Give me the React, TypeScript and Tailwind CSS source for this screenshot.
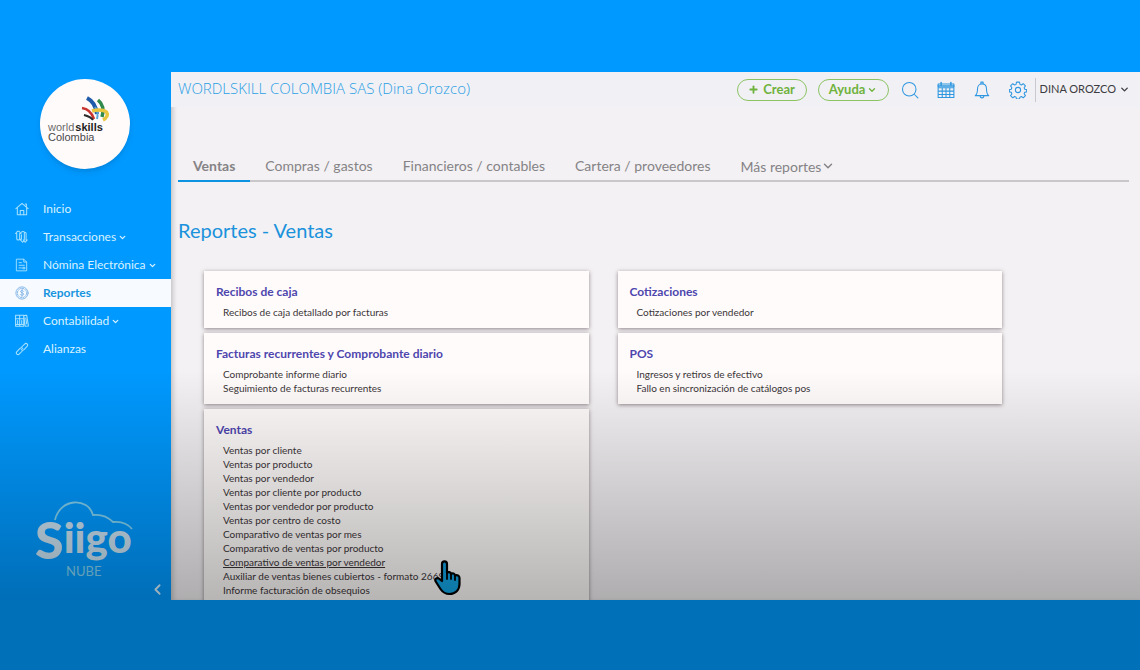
import type { ReactNode } from "react";
import { ChevronDown, ChevronLeft, Plus } from "lucide-react";

type MenuItem = {
  label: string;
  icon: ReactNode;
  active?: boolean;
  dropdown?: boolean;
};

type ReportGroup = {
  title: string;
  reports: string[];
};

const iconProps = {
  viewBox: "0 0 24 24",
  fill: "none",
  stroke: "currentColor",
  strokeLinecap: "round" as const,
  strokeLinejoin: "round" as const,
};

const menu: MenuItem[] = [
  {
    label: "Inicio",
    icon: (
      <svg {...iconProps} strokeWidth={1.8} className="size-[14px]">
        <path d="M1.5 11.5 12 2.5l10.5 9M4 9.8V22h16V9.8M17.5 3.5h2v4" />
        <path d="M9 22v-7.500h6V22" />
      </svg>
    ),
  },
  {
    label: "Transacciones",
    dropdown: true,
    icon: (
      <svg {...iconProps} strokeWidth={1.8} className="size-[14px]">
        <path d="M4.500 2 1 6h2v9c0 3 5 3 5 0V6h2.500L6.500 2Z" />
        <path d="M11 4c1-2 5-2 5 0v3M11 8v8H8.500l4.500 5 2-2M16 7v10h-2l3.500 4 3.500-4h-2V6c0-2-2-2-3-1" />
      </svg>
    ),
  },
  {
    label: "Nómina Electrónica",
    dropdown: true,
    icon: (
      <svg {...iconProps} strokeWidth={1.6} className="size-[14px]">
        <path d="M3 2h12l5 5v15H3ZM15 2v5h5" />
        <path d="M7 8h4M7 12.500h9M7 17h4M14 16h3v2.500h-3Z" />
      </svg>
    ),
  },
  {
    label: "Reportes",
    active: true,
    icon: (
      <svg {...iconProps} strokeWidth={1.6} className="size-[14px]">
        <circle cx="12" cy="12" r="10.500" />
        <circle cx="12" cy="12" r="8" strokeDasharray="4 2" />
        <path d="M15 9c-.5-1.500-5.500-2-5.500.5S15 11.500 15 14s-5 2.500-6 .5M12 6v12" />
      </svg>
    ),
  },
  {
    label: "Contabilidad",
    dropdown: true,
    icon: (
      <svg {...iconProps} strokeWidth={1.8} className="size-[14px]">
        <path d="M1 2h7v19H1ZM8 2h7v19H8ZM15 2.500l5-.5 3 18.500-5.500.5Z" />
        <path d="M1 8h7M8 8h7M4.500 11v6M11.500 11v6M1 18h14M18.500 7l1.500 10" />
      </svg>
    ),
  },
  {
    label: "Alianzas",
    icon: (
      <svg {...iconProps} strokeWidth={1.8} className="size-[14px]">
        <path d="m11 9 5.500-5.500c3-3 7 1 4.200 4L15.500 13c-1.500 1.500-3.500 1.300-4.800 0" />
        <path d="m13 15-5.500 5.500c-3 3-7-1-4.200-4L8.500 11c1.500-1.500 3.500-1.300 4.800 0" />
      </svg>
    ),
  },
];

const tabs = [
  "Ventas",
  "Compras / gastos",
  "Financieros / contables",
  "Cartera / proveedores",
];

const leftGroups: ReportGroup[] = [
  { title: "Recibos de caja", reports: ["Recibos de caja detallado por facturas"] },
  {
    title: "Facturas recurrentes y Comprobante diario",
    reports: ["Comprobante informe diario", "Seguimiento de facturas recurrentes"],
  },
  {
    title: "Ventas",
    reports: [
      "Ventas por cliente",
      "Ventas por producto",
      "Ventas por vendedor",
      "Ventas por cliente por producto",
      "Ventas por vendedor por producto",
      "Ventas por centro de costo",
      "Comparativo de ventas por mes",
      "Comparativo de ventas por producto",
      "Comparativo de ventas por vendedor",
      "Auxiliar de ventas bienes cubiertos - formato 2669",
      "Informe facturación de obsequios",
    ],
  },
];

const rightGroups: ReportGroup[] = [
  { title: "Cotizaciones", reports: ["Cotizaciones por vendedor"] },
  {
    title: "POS",
    reports: ["Ingresos y retiros de efectivo", "Fallo en sincronización de catálogos pos"],
  },
];

const hovered = "Comparativo de ventas por vendedor";

function CompanyLogo() {
  return (
    <svg viewBox="0 0 90 90" className="size-[90px] rounded-full bg-[#fffbfb] shadow-md" role="img" aria-label="worldskills Colombia">
      <g fill="none" strokeLinecap="butt">
        <path d="M47 19c6 3 9 9 10 16" stroke="#1f5ba8" strokeWidth="4" />
        <path d="M58 21c5 4 6 10 4 17" stroke="#2f8a4c" strokeWidth="3.500" />
        <path d="M55 28c3 4 3 8 2 12" stroke="#5aa7d6" strokeWidth="2" />
        <path d="M42 29c7 1 10 5 12 11" stroke="#c8342f" strokeWidth="2.500" />
        <path d="M44 36c4 1 7 2 9 5" stroke="#2b2b2b" strokeWidth="2" />
        <path d="M52 32c8-2 17-1 15 5-1 2-2 3-4 4" stroke="#e9c63f" strokeWidth="3.500" />
      </g>
      <text x="8" y="52" fontSize="11" fill="#6b6b6b" fontFamily="Liberation Sans, sans-serif">
        world
        <tspan dx="1" fill="#1e1e1e" fontWeight="700">skills</tspan>
      </text>
      <text x="8" y="62" fontSize="11" fill="#4a4a4a" fontFamily="Liberation Sans, sans-serif">Colombia</text>
    </svg>
  );
}

function SiigoLogo() {
  return (
    <svg viewBox="0 0 100 78" className="w-[100px]" role="img" aria-label="Siigo Nube">
      <path
        d="M20 19C25-3 53-4 58 14c8-1 15 2 20 7 9-1 15 2 19 7"
        fill="none"
        stroke="#83d3f3"
        strokeWidth="1.800"
      />
      <text x="0" y="58" fontSize="52" fill="#c9e2f2" fontFamily="Lato, sans-serif" fontWeight="900">
        S<tspan dy="-6" fontSize="42">iigo</tspan>
      </text>
      <text x="31" y="75" fontSize="13" fill="#83d3f3" fontFamily="Lato, sans-serif">NUBE</text>
    </svg>
  );
}

function HandCursor() {
  return (
    <svg viewBox="0 0 28 36" className="pointer-events-none absolute top-[5px] left-[211px] z-10 w-[28px]" aria-hidden="true">
      <path
        d="M8 4c0-3.500 5-3.500 5 0v9c1-1.500 4-1 4 1 1.500-1.300 4-.5 4 1.500 2-1 4.500 0 4.500 2.500v6c0 6-4 10-10 10-5 0-7-2-9-5L2 22c-2-3 1-5 3.500-3L8 21Z"
        fill="#12a5e6"
        stroke="#000"
        strokeWidth="2.200"
        strokeLinejoin="round"
      />
      <path d="M13 13v6M17 14v5M21 16v4" stroke="#000" strokeWidth="1.800" strokeLinecap="round" />
    </svg>
  );
}

function Sidebar() {
  return (
    <aside className="flex w-[171px] shrink-0 flex-col bg-[#0099ff] pt-[7px] text-[#d9f1ff]">
      <div className="flex justify-center pr-[2px]">
        <CompanyLogo />
      </div>
      <nav className="mt-[26px]">
        {menu.map((item) => (
          <a
            key={item.label}
            href="#"
            className={
              item.active
                ? "flex h-7 items-center bg-[#f7fbff] pl-[15px] text-[12px] font-bold text-[#1795e0]"
                : "flex h-7 items-center pl-[15px] text-[12px]"
            }
          >
            <span className={item.active ? "text-[#7fb3e6]" : "text-[#a5e0ff]"}>{item.icon}</span>
            <span className="ml-[14px]">{item.label}</span>
            {item.dropdown && <ChevronDown className="ml-[2px] size-[9px]" strokeWidth={3.5} />}
          </a>
        ))}
      </nav>
      <div className="mt-auto flex justify-center pr-[2px]">
        <SiigoLogo />
      </div>
      <button className="mt-[2px] mr-[5px] mb-[2px] self-end" aria-label="Contraer menú">
        <ChevronLeft className="size-[17px]" strokeWidth={2.5} />
      </button>
    </aside>
  );
}

function TopBar() {
  return (
    <header className="flex h-[35px] items-center bg-[#f1f0f5] pr-[10px] pl-[7px]">
      <h1 className="pb-[2px] font-['Open_Sans'] text-[15px] font-light text-[#2ba0e4]">
        WORDLSKILL COLOMBIA SAS (Dina Orozco)
      </h1>
      <div className="ml-auto flex items-center text-[#2f97e0]">
        <button className="flex h-[22px] w-[70px] items-center justify-center gap-1 rounded-full border border-[#8cc464] text-[13px] font-bold text-[#6fb23c]">
          <Plus className="size-[11px]" strokeWidth={4} />
          Crear
        </button>
        <button className="ml-[11px] flex h-[22px] w-[71px] items-center justify-center gap-[2px] rounded-full border border-[#8cc464] text-[13px] font-bold text-[#6fb23c]">
          Ayuda
          <ChevronDown className="size-[10px]" strokeWidth={3} />
        </button>
        <div className="ml-3 flex items-center gap-[18px]">
          <button aria-label="Buscar">
            <svg {...iconProps} strokeWidth={1.4} className="size-[18px]">
              <circle cx="11" cy="11" r="9" />
              <path d="m18 18 4.500 4.500" />
            </svg>
          </button>
          <button aria-label="Calendario">
            <svg {...iconProps} strokeWidth={1.4} className="size-[18px]">
              <path d="M1.500 4h21v18h-21ZM1.500 9h21M1.500 13.500h21M1.500 18h21M7 9v13M12 9v13M17 9v13" />
              <path d="M1.500 6.500h21M5.500 2v3M18.500 2v3" strokeWidth={2} />
            </svg>
          </button>
          <button aria-label="Notificaciones">
            <svg {...iconProps} strokeWidth={1.4} className="size-[18px]">
              <path d="M3 19.500c3-2.500 3-5 3-9C6 6.500 8.500 4 12 4s6 2.500 6 6.500c0 4 0 6.500 3 9ZM10.500 4V1.500h3V4M9.500 19.500c0 4 5 4 5 0" />
            </svg>
          </button>
          <button aria-label="Configuración">
            <svg {...iconProps} strokeWidth={1.4} className="size-[18px]">
              <circle cx="12" cy="12" r="3.500" />
              <path d="M10 1.500h4l.6 3 1.800.8 2.600-1.700 2.900 2.900-1.700 2.500.8 1.900 2.500.6v3l-2.500.6-.8 1.900 1.700 2.500-2.900 2.900-2.600-1.700-1.800.8-.6 2.500h-4l-.6-2.500-1.800-.8L5 22.400l-2.900-2.900L3.800 17 3 15.100.5 14.500v-3l2.500-.6.8-1.900-1.700-2.500L5 3.600l2.600 1.700 1.800-.8Z" />
            </svg>
          </button>
        </div>
        <button className="ml-2 flex h-[24px] items-center gap-[3px] border-l border-[#c9c9cf] pl-1 text-[11px] text-[#3c3c40]">
          DINA OROZCO
          <ChevronDown className="size-[11px]" strokeWidth={3} />
        </button>
      </div>
    </header>
  );
}

function ReportCard({ group }: { group: ReportGroup }) {
  return (
    <section className="bg-[#fffbfb] px-3 pt-[11px] pb-[9px] shadow-[0_1px_4px_rgba(60,40,50,0.55)]">
      <h3 className="h-[23px] text-[12px] leading-5 font-bold text-[#4e46ae]">{group.title}</h3>
      <ul className="pl-[7px] text-[10px] leading-[14px] text-[#3a3537]">
        {group.reports.map((report) => (
          <li key={report} className="relative">
            <a href="#" className={report === hovered ? "underline" : ""}>
              {report}
            </a>
            {report === hovered && <HandCursor />}
          </li>
        ))}
      </ul>
    </section>
  );
}

export default function App() {
  return (
    <div className="flex h-screen flex-col font-['Lato',sans-serif]">
      <div className="h-[72px] shrink-0 bg-[#0099ff]" />
      <div className="relative flex min-h-0 flex-1 overflow-hidden">
        <Sidebar />
        <main className="min-w-0 flex-1 overflow-hidden bg-[#f3f1f3] shadow-[inset_4px_0_5px_-2px_rgba(0,0,0,0.2)]">
          <TopBar />
          <nav className="mt-[42px] mr-[11px] ml-[7px] flex border-b-2 border-[#c9c7ca] text-[14px] text-[#858386]">
            {tabs.map((tab, i) => (
              <a
                key={tab}
                href="#"
                className={
                  i === 0
                    ? "-mb-[2px] border-b-2 border-[#0b93e2] px-[15px] pt-[7px] pb-1 leading-5 font-bold"
                    : "px-[15px] pt-[7px] pb-1 leading-5"
                }
              >
                {tab}
              </a>
            ))}
            <button className="flex items-center pt-[3px] pl-[15px]">
              Más reportes
              <ChevronDown className="size-[14px]" strokeWidth={2.5} />
            </button>
          </nav>
          <h2 className="mt-[34px] ml-[7px] text-[20px] leading-7 text-[#1a92dc]">Reportes - Ventas</h2>
          <div className="mt-[27px] mr-[138px] ml-[33px] grid grid-cols-2 gap-[29px]">
            <div className="flex flex-col gap-[5px]">
              {leftGroups.map((group) => (
                <ReportCard key={group.title} group={group} />
              ))}
            </div>
            <div className="flex flex-col gap-[5px]">
              {rightGroups.map((group) => (
                <ReportCard key={group.title} group={group} />
              ))}
            </div>
          </div>
        </main>
        <div className="pointer-events-none absolute inset-x-0 bottom-0 z-20 h-[230px] bg-linear-to-b from-black/0 to-black/28" />
      </div>
      <div className="h-[70px] shrink-0 bg-[#0070b8]" />
    </div>
  );
}
